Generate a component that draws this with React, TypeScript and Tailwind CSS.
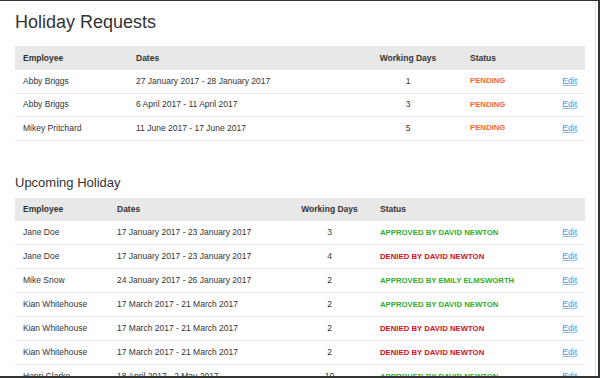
const requests = [
  { name: "Abby Briggs", dates: "27 January 2017 - 28 January 2017", days: 1 },
  { name: "Abby Briggs", dates: "6 April 2017 - 11 April 2017", days: 3 },
  { name: "Mikey Pritchard", dates: "11 June 2017 - 17 June 2017", days: 5 },
];

const upcoming = [
  { name: "Jane Doe", dates: "17 January 2017 - 23 January 2017", days: 3, ok: true, by: "DAVID NEWTON" },
  { name: "Jane Doe", dates: "17 January 2017 - 23 January 2017", days: 4, ok: false, by: "DAVID NEWTON" },
  { name: "Mike Snow", dates: "24 January 2017 - 26 January 2017", days: 2, ok: true, by: "EMILY ELMSWORTH" },
  { name: "Kian Whitehouse", dates: "17 March 2017 - 21 March 2017", days: 2, ok: true, by: "DAVID NEWTON" },
  { name: "Kian Whitehouse", dates: "17 March 2017 - 21 March 2017", days: 2, ok: false, by: "DAVID NEWTON" },
  { name: "Kian Whitehouse", dates: "17 March 2017 - 21 March 2017", days: 2, ok: false, by: "DAVID NEWTON" },
  { name: "Henri Clarke", dates: "18 April 2017 - 2 May 2017", days: 10, ok: true, by: "DAVID NEWTON" },
];

function EditLink() {
  return (
    <a href="#" className="text-[#4a90e2] underline underline-offset-1 decoration-[#9cc3ee]">
      Edit
    </a>
  );
}

export default function App() {
  return (
    <div
      className="w-[600px] h-[378px] overflow-hidden bg-white border-t border-b-2 border-r-2 border-[#333] text-[#333]"
      style={{ fontFamily: '"Liberation Sans", Arial, Helvetica, sans-serif' }}
    >
      <div className="h-full mr-[2px] border-r border-[#dedede] pl-[15px] pr-[12px] pt-[11px]">
        <h1 className="text-[18px] leading-[20px] font-normal">Holiday Requests</h1>

        <div className="mt-[14px] w-[570px] text-[8.5px]">
          <div className="grid grid-cols-[113px_226px_108px_78px_45px] h-[24px] items-center bg-[#e8e8e8] font-bold">
            <div className="pl-2">Employee</div>
            <div className="pl-2">Dates</div>
            <div className="text-center">Working Days</div>
            <div className="pl-2">Status</div>
            <div />
          </div>
          {requests.map((r, i) => (
            <div
              key={i}
              className="grid grid-cols-[113px_226px_108px_78px_45px] h-[23.5px] items-center border-b border-[#e8e8e8]"
            >
              <div className="pl-2">{r.name}</div>
              <div className="pl-2">{r.dates}</div>
              <div className="text-center">{r.days}</div>
              <div className="pl-2 font-bold text-[7.75px] text-[#f26a36]">PENDING</div>
              <div className="text-right pr-2">
                <EditLink />
              </div>
            </div>
          ))}
        </div>

        <h2 className="mt-[34px] text-[13px] leading-[15px] font-normal">Upcoming Holiday</h2>

        <div className="mt-[8px] w-[570px] text-[8.5px]">
          <div className="grid grid-cols-[94px_178px_85px_168px_45px] h-[23.5px] items-center bg-[#e8e8e8] font-bold">
            <div className="pl-2">Employee</div>
            <div className="pl-2">Dates</div>
            <div className="text-center">Working Days</div>
            <div className="pl-2">Status</div>
            <div />
          </div>
          {upcoming.map((r, i) => (
            <div
              key={i}
              className="grid grid-cols-[94px_178px_85px_168px_45px] h-[24px] items-center border-b border-[#e8e8e8]"
            >
              <div className="pl-2">{r.name}</div>
              <div className="pl-2">{r.dates}</div>
              <div className="text-center">{r.days}</div>
              <div className={"pl-2 font-bold text-[7.75px] " + (r.ok ? "text-[#2fae2f]" : "text-[#d0101e]")}>
                {r.ok ? "APPROVED" : "DENIED"} BY {r.by}
              </div>
              <div className="text-right pr-2">
                <EditLink />
              </div>
            </div>
          ))}
        </div>
      </div>
    </div>
  );
}
